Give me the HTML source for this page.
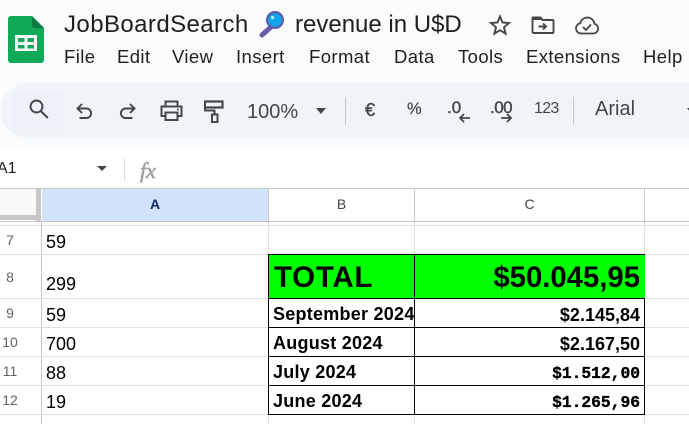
<!DOCTYPE html>
<html><head><meta charset="utf-8">
<style>
html,body{margin:0;padding:0;width:689px;height:424px;overflow:hidden;background:#fff}
body{position:relative;font-family:"Liberation Sans",sans-serif;color:#000}
.a{position:absolute}
.t{position:absolute;white-space:nowrap;line-height:1}
.m{font-size:18.5px;letter-spacing:.4px;color:#1f1f1f;top:48px}
.h{background:#c7c7c7}
.l{background:#e1e1e1}
.r{font-size:14px;color:#5f6368;text-align:center}
.n{font-size:18px;left:46px;color:#000}
.b{font-weight:bold;font-size:18px;letter-spacing:.25px;left:273px}
.v{font-weight:bold;font-size:18px;right:49px}
.mv{font-family:"Liberation Mono",monospace;font-size:16.3px;-webkit-text-stroke:.35px #000}
.k{background:#000}
</style></head><body>
<div class="a" style="left:0;top:0;width:689px;height:149px;background:#f9fbfd"></div>
<div class="a" style="left:1px;top:83px;width:720px;height:55px;border-radius:27px;background:#f0f4f9"></div>
<div class="a" style="left:13px;top:92px;width:51px;height:38px;background:#edf1fa"></div>

<svg class="a" style="left:8px;top:16px" width="36" height="48" viewBox="0 0 36 48">
<path d="M3 0H24L36 12V44a3 3 0 0 1-3 3H3a3 3 0 0 1-3-3V3a3 3 0 0 1 3-3z" fill="#0fa958"/>
<path d="M24 0L36 12H27a3 3 0 0 1-3-3z" fill="#0b7a43"/>
<path d="M7 19H29V35H7z" fill="#f4fbf7"/>
<path d="M10 22H16.500V26H10zM19.500 22H26V26H19.500zM10 29H16.500V32.500H10zM19.500 29H26V32.500H19.500z" fill="#0fa958"/>
</svg>

<div class="t" style="left:64px;top:13px;font-size:24px;letter-spacing:.42px;color:#1f1f1f">JobBoardSearch</div>
<svg class="a" style="left:258px;top:10px" width="28" height="28" viewBox="0 0 28 28">
<path d="M13 17L4 25" stroke="#6a5aa8" stroke-width="5" stroke-linecap="round"/>
<circle cx="17" cy="10" r="9" fill="#5b5ea6"/>
<circle cx="17" cy="10" r="6.700" fill="#0ea5e9"/>
<circle cx="14.500" cy="7.500" r="1.600" fill="#bfe9fb"/>
</svg>
<div class="t" style="left:295px;top:13px;font-size:24px;color:#1f1f1f">revenue in U$D</div>

<svg class="a" style="left:488px;top:13px" width="24" height="24" viewBox="0 0 24 24"><path d="M12 3.500l2.500 6 6.500.5-5 4.300 1.600 6.300L12 17.200l-5.600 3.400L8 14.300 3 10l6.500-.5z" fill="none" stroke="#444746" stroke-width="1.900" stroke-linejoin="miter"/></svg>
<svg class="a" style="left:531px;top:14px" width="24" height="22" viewBox="0 0 24 22"><path d="M2 3.500h7.500l2 2.500H21.500a1 1 0 0 1 1 1V18a1 1 0 0 1-1 1H2.500a1 1 0 0 1-1-1V4z" fill="none" stroke="#444746" stroke-width="1.900"/><path d="M2 3h7.500l2 3H2z" fill="#444746"/><path d="M7.500 12.500h7M12 9.500l3 3-3 3" fill="none" stroke="#444746" stroke-width="1.900"/></svg>
<svg class="a" style="left:574px;top:13px" width="26" height="24" viewBox="0 0 26 24"><path d="M7 20.500a5.200 5.200 0 0 1-.8-10.300A7.500 7.500 0 0 1 13.500 4.500a7.300 7.300 0 0 1 7 6.200A5 5 0 0 1 19.500 20.500z" fill="none" stroke="#444746" stroke-width="1.800"/><path d="M9 14l3 3 5-5.500" fill="none" stroke="#444746" stroke-width="1.900"/></svg>

<div class="t m" style="left:64px">File</div>
<div class="t m" style="left:117px">Edit</div>
<div class="t m" style="left:172px">View</div>
<div class="t m" style="left:236px">Insert</div>
<div class="t m" style="left:309px">Format</div>
<div class="t m" style="left:394px">Data</div>
<div class="t m" style="left:458px">Tools</div>
<div class="t m" style="left:526px">Extensions</div>
<div class="t m" style="left:643px">Help</div>

<svg class="a" style="left:27px;top:98px" width="24" height="24" viewBox="0 0 24 24"><circle cx="9.500" cy="8.500" r="6" fill="none" stroke="#444746" stroke-width="1.900"/><path d="M13.800 13l7 7" stroke="#444746" stroke-width="2"/></svg>
<svg class="a" style="left:74px;top:101px" width="22" height="22" viewBox="0 0 22 22"><path d="M8 3L3.500 7.500 8 12M3.500 7.500H13a4.800 4.800 0 0 1 0 9.500H5.500" fill="none" stroke="#444746" stroke-width="1.900"/></svg>
<svg class="a" style="left:116px;top:101px" width="22" height="22" viewBox="0 0 22 22"><path d="M14 3l4.500 4.500L14 12M18.500 7.500H9a4.800 4.800 0 0 0 0 9.500h7.500" fill="none" stroke="#444746" stroke-width="1.900"/></svg>
<svg class="a" style="left:159px;top:99px" width="25" height="24" viewBox="0 0 25 24"><path d="M6.500 7V2.500h12V7M6.500 17H2.500V7.500h20V17h-4M6.500 13.500h12V21h-12z" fill="none" stroke="#444746" stroke-width="2"/><circle cx="19" cy="10.500" r="1" fill="#444746"/></svg>
<svg class="a" style="left:202px;top:98px" width="24" height="28" viewBox="0 0 24 28"><path d="M3 3.500h17.500v6H3" fill="none" stroke="#444746" stroke-width="2.200"/><path d="M3 2.500v10h9.500v4" fill="none" stroke="#444746" stroke-width="2"/><path d="M10 16.500h5.500V24H10z" fill="none" stroke="#444746" stroke-width="2"/></svg>

<div class="t" style="left:247px;top:102px;font-size:20px;color:#444746">100%</div>
<div class="a" style="left:316px;top:108px;border:5.500px solid transparent;border-top:6px solid #444746;border-bottom:0"></div>
<div class="a" style="left:345px;top:97px;width:1px;height:28px;background:#c7c7c7"></div>
<div class="t" style="left:365px;top:101px;font-size:18px;color:#444746;-webkit-text-stroke:.4px #444746">€</div>
<div class="t" style="left:407px;top:101px;font-size:16.5px;color:#444746;-webkit-text-stroke:.2px #444746">%</div>
<div class="t" style="left:447px;top:99px;font-size:17px;color:#444746;-webkit-text-stroke:.4px #444746">.0</div>
<svg class="a" style="left:457px;top:112px" width="14" height="12" viewBox="0 0 14 12"><path d="M13 6H3M7 2L3 6l4 4" fill="none" stroke="#444746" stroke-width="1.800"/></svg>
<div class="t" style="left:490px;top:99px;font-size:17px;letter-spacing:-.5px;color:#444746;-webkit-text-stroke:.4px #444746">.00</div>
<svg class="a" style="left:500px;top:112px" width="14" height="12" viewBox="0 0 14 12"><path d="M1 6h10M7 2l4 4-4 4" fill="none" stroke="#444746" stroke-width="1.800"/></svg>
<div class="t" style="left:534px;top:101px;font-size:16px;letter-spacing:-.7px;color:#444746">123</div>
<div class="a" style="left:573px;top:97px;width:1px;height:28px;background:#c7c7c7"></div>
<div class="t" style="left:595px;top:99px;font-size:20px;color:#444746">Arial</div>
<div class="a" style="left:687px;top:108px;border:4px solid transparent;border-top:5px solid #444746;border-bottom:0"></div>

<div class="t" style="left:-3px;top:161px;font-size:16px;color:#1f1f1f">A1</div>
<div class="a" style="left:97px;top:166px;border:5px solid transparent;border-top:5px solid #444746;border-bottom:0"></div>
<div class="a" style="left:124px;top:158px;width:1px;height:23px;background:#dadce0"></div>
<div class="t" style="left:140px;top:158px;font:italic 22px 'Liberation Serif',serif;color:#a0a0a0;-webkit-text-stroke:.6px #a0a0a0">fx</div>

<div class="a" style="left:0;top:188px;width:689px;height:1px;background:#c7c7c7"></div>
<div class="a" style="left:0;top:189px;width:36px;height:26px;background:#f8f9fa"></div>
<div class="a" style="left:36px;top:189px;width:5px;height:32px;background:#c7c7c7"></div>
<div class="a" style="left:0;top:215px;width:36px;height:5px;background:#c7c7c7"></div>
<div class="a" style="left:42px;top:189px;width:226px;height:32px;background:#d3e3fd"></div>
<div class="t" style="left:42px;width:226px;text-align:center;top:197px;font-size:14px;font-weight:bold;color:#0b2a6b">A</div>
<div class="t" style="left:269px;width:145px;text-align:center;top:197px;font-size:14px;color:#444">B</div>
<div class="t" style="left:415px;width:229px;text-align:center;top:197px;font-size:14px;color:#444">C</div>
<div class="a h" style="left:268px;top:189px;width:1px;height:32px"></div>
<div class="a h" style="left:414px;top:189px;width:1px;height:32px"></div>
<div class="a h" style="left:644px;top:189px;width:1px;height:32px"></div>
<div class="a h" style="left:0;top:221px;width:689px;height:1px"></div>
<div class="a l" style="left:0;top:225px;width:689px;height:1px"></div>

<div class="a h" style="left:41px;top:222px;width:1px;height:202px"></div>
<div class="a l" style="left:268px;top:222px;width:1px;height:202px"></div>
<div class="a l" style="left:414px;top:222px;width:1px;height:202px"></div>
<div class="a l" style="left:644px;top:222px;width:1px;height:202px"></div>
<div class="a l" style="left:0;top:254px;width:689px;height:1px"></div>
<div class="a l" style="left:0;top:298px;width:689px;height:1px"></div>
<div class="a l" style="left:0;top:327px;width:689px;height:1px"></div>
<div class="a l" style="left:0;top:356px;width:689px;height:1px"></div>
<div class="a l" style="left:0;top:385px;width:689px;height:1px"></div>
<div class="a l" style="left:0;top:414px;width:689px;height:1px"></div>

<div class="t r" style="left:-10px;width:40px;top:233px">7</div>
<div class="t r" style="left:-10px;width:40px;top:270px">8</div>
<div class="t r" style="left:-10px;width:40px;top:306px">9</div>
<div class="t r" style="left:-10px;width:40px;top:335px">10</div>
<div class="t r" style="left:-10px;width:40px;top:364px">11</div>
<div class="t r" style="left:-10px;width:40px;top:393px">12</div>

<div class="t n" style="top:233px">59</div>
<div class="t n" style="top:275px">299</div>
<div class="t n" style="top:306px">59</div>
<div class="t n" style="top:335px">700</div>
<div class="t n" style="top:364px">88</div>
<div class="t n" style="top:393px">19</div>

<div class="a" style="left:269px;top:255px;width:376px;height:43px;background:#00ff00"></div>
<div class="a k" style="left:268px;top:254px;width:377px;height:1px"></div>
<div class="a k" style="left:268px;top:298px;width:377px;height:1px"></div>
<div class="a k" style="left:268px;top:327px;width:377px;height:1px"></div>
<div class="a k" style="left:268px;top:356px;width:377px;height:1px"></div>
<div class="a k" style="left:268px;top:385px;width:377px;height:1px"></div>
<div class="a k" style="left:268px;top:414px;width:377px;height:1px"></div>
<div class="a k" style="left:268px;top:254px;width:1px;height:161px"></div>
<div class="a k" style="left:414px;top:254px;width:1px;height:161px"></div>
<div class="a k" style="left:644px;top:299px;width:1px;height:116px"></div>

<div class="t" style="left:274px;top:263px;font-size:29.5px;letter-spacing:.7px;font-weight:bold">TOTAL</div>
<div class="t" style="right:49px;top:263px;font-size:29.3px;font-weight:bold">$50.045,95</div>
<div class="t b" style="top:305px">September 2024</div>
<div class="t b" style="top:334px">August 2024</div>
<div class="t b" style="top:363px">July 2024</div>
<div class="t b" style="top:392px">June 2024</div>
<div class="t v" style="top:306px">$2.145,84</div>
<div class="t v" style="top:335px">$2.167,50</div>
<div class="t v mv" style="top:366px">$1.512,00</div>
<div class="t v mv" style="top:395px">$1.265,96</div>
</body></html>
